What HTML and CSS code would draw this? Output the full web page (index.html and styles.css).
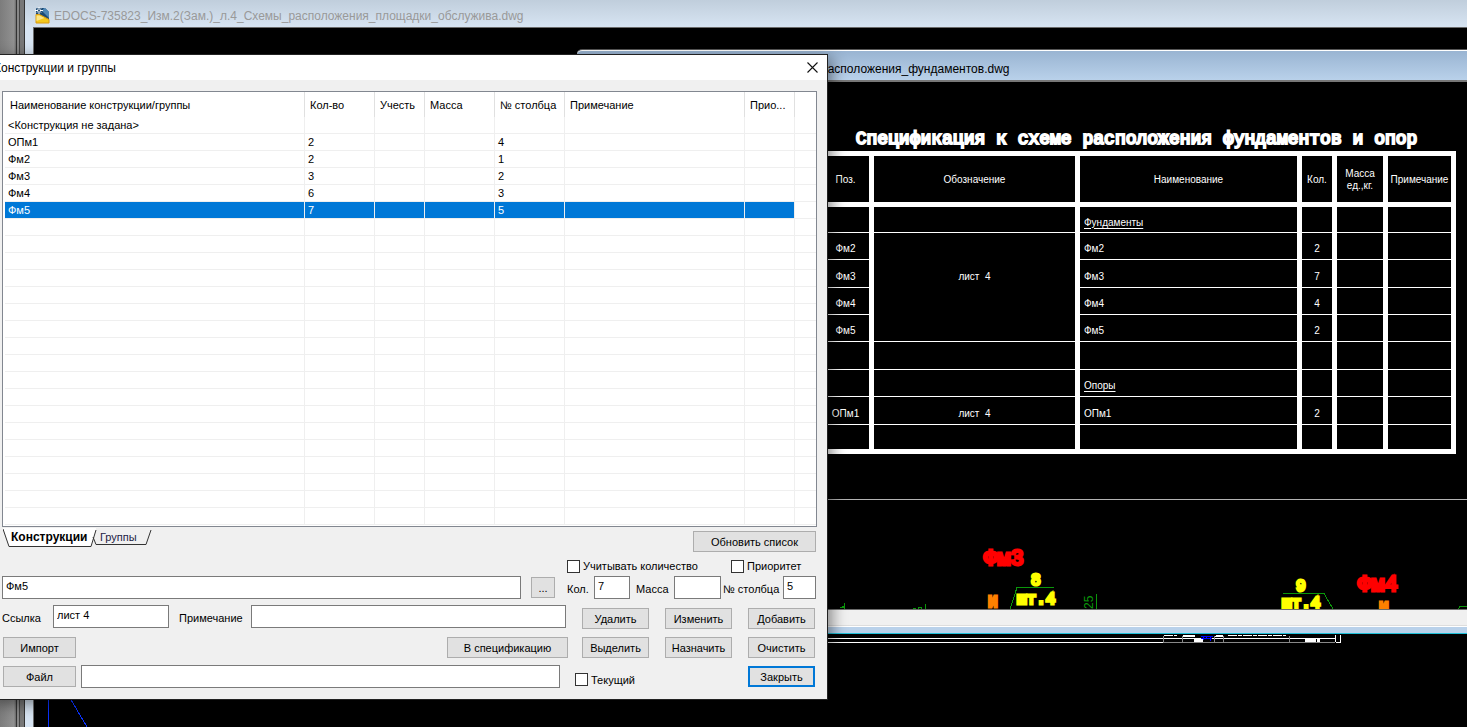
FILE: index.html
```html
<!DOCTYPE html>
<html lang="ru">
<head>
<meta charset="utf-8">
<title>Конструкции и группы</title>
<link rel="stylesheet" href="styles.css">
</head>
<body>
<div class="desktop">
  <div class="dock"></div>
  <section class="back-window">
    <header class="back-title">
      <svg class="doc-icon" width="16" height="17" viewBox="0 0 16 17">
        <path d="M1 1h9l4 4v11H1z" fill="#1c4a75"/>
        <path d="M9 1h1l4 4v6L7 4z" fill="#4f87b5"/>
        <path d="M1 7.500h3.500L14 12.500V16H1z" fill="#f4c81c" stroke="#d99a10"/>
        <path d="M1.500 8.500h3l5 2.500-8 3z" fill="#fbe58a"/>
        <path d="M4 0v7M0 3.500h8M2 1.500l4 4M6 1.500l-4 4" stroke="#fff"/>
        <circle cx="4" cy="3.500" r="1" fill="#1c4a75"/>
      </svg>
      <span>EDOCS-735823_Изм.2(Зам.)_л.4_Схемы_расположения_площадки_обслужива.dwg</span>
    </header>
    <div class="back-canvas">
      <svg class="back-drawing" width="100%" height="100%">
        <g transform="translate(-34 -28)" fill="none" shape-rendering="crispEdges">
          <path d="M48.500 690V727M70 698L87 727" stroke="#0a32ff"/>
          <path d="M820 638.500H1335M820 642.500H1163M1335.500 635v7M1340.500 635v7.500h-5" stroke="#fff"/>
          <path d="M1163 642.500h172M1163.500 636v6M1182.500 636v6M1214.500 636v6M1223.500 636v6M1289.500 636v6" stroke="#888"/>
          <path d="M1164 635.500h13M1183 636.500h12M1215 636.500h8M1228 635.500h58" stroke="#fff" stroke-dasharray="9 1 4 1"/>
          <path d="M1183 635h12v2h-12zM1194 638h9v4h-9zM1216 635h7v2h-7zM1305 639h11v3h-11zM1317 639h3v3h-3z" fill="#fff"/>
          <path d="M1201 636.500h12M1203 637v3M1206 637v2M1210 637v4M1201 638.500h11" stroke="#00f"/>
        </g>
      </svg>
    </div>
  </section>

  <section class="front-window">
    <header class="front-title"><span>расположения_фундаментов.dwg</span></header>
    <div class="front-canvas">
      <div class="spec">
        <h1 class="spec-title">Спецификация к схеме расположения фундаментов и опор</h1>
        <table class="spec-table">
          <colgroup><col class="s1"><col class="s2"><col class="s3"><col class="s4"><col class="s5"><col class="s6"></colgroup>
          <thead>
            <tr><th>Поз.</th><th>Обозначение</th><th>Наименование</th><th>Кол.</th><th>Масса<br>ед.,кг.</th><th>Примечание</th></tr>
          </thead>
          <tbody>
            <tr class="first"><td></td><td></td><td class="name"><u>Фундаменты</u></td><td></td><td></td><td></td></tr>
            <tr><td>Фм2</td><td rowspan="4" class="sheet">лист&nbsp; 4</td><td class="name">Фм2</td><td>2</td><td></td><td></td></tr>
            <tr class="tall"><td>Фм3</td><td class="name">Фм3</td><td>7</td><td></td><td></td></tr>
            <tr><td>Фм4</td><td class="name">Фм4</td><td>4</td><td></td><td></td></tr>
            <tr><td>Фм5</td><td class="name">Фм5</td><td>2</td><td></td><td></td></tr>
            <tr class="tall"><td></td><td></td><td></td><td></td><td></td><td></td></tr>
            <tr><td></td><td></td><td class="name"><u>Опоры</u></td><td></td><td></td><td></td></tr>
            <tr class="tall"><td>ОПм1</td><td>лист&nbsp; 4</td><td class="name">ОПм1</td><td>2</td><td></td><td></td></tr>
            <tr class="last"><td></td><td></td><td></td><td></td><td></td><td></td></tr>
          </tbody>
        </table>
      </div>
      <svg class="plan" width="100%">
        <g transform="translate(-577 -454)">
          <path d="M577 499.500H2000" stroke="#fff" stroke-opacity=".7" shape-rendering="crispEdges"/>
          <g fill="none" stroke="#0a960a" shape-rendering="crispEdges">
            <path d="M1010 609L1017 587.500H1054M1283 593.500H1324L1333 609M1096.500 594V609M925.500 604V609M844.500 603V609M840 608l4-2M841 607h3v2M1458 609l2-2.500h7M913 608.500h3M918 608.500l1-1h2l1 1"/>
          </g>
          <text class="plan-dim" transform="translate(1093 609) rotate(-90)">25</text>
          <text class="plan-mark" x="984" y="565">Фм3</text>
          <text class="plan-mark" x="1358" y="591">Фм4</text>
          <g class="plan-count">
            <text x="1031" y="585">8</text><text x="1017" y="604">шт.4</text>
            <text x="1296" y="591">9</text><text x="1282" y="608">шт.4</text>
          </g>
          <g class="plan-note"><text x="988" y="607">И</text><text x="1379" y="613">И</text></g>
        </g>
      </svg>
    </div>
    <div class="front-status"></div>
    <div class="front-edge"></div>
  </section>

  <section class="dialog" role="dialog" aria-labelledby="dlg-title">
    <header class="dlg-head">
      <span id="dlg-title">Конструкции и группы</span>
      <button class="close" aria-label="Закрыть окно"><svg width="11" height="11" viewBox="0 0 11 11"><path d="M.5 .5l10 10M10.500 .5l-10 10" stroke="#111" stroke-width="1.100"/></svg></button>
    </header>
    <div class="dlg-body">
      <div class="list">
        <table class="grid">
          <colgroup><col class="g1"><col class="g2"><col class="g3"><col class="g2"><col class="g2"><col class="g6"><col class="g3"><col></colgroup>
          <thead><tr><th>Наименование конструкции/группы</th><th>Кол-во</th><th>Учесть</th><th>Масса</th><th>№ столбца</th><th>Примечание</th><th>Прио...</th><th></th></tr></thead>
          <tbody>
            <tr><td>&lt;Конструкция не задана&gt;</td><td></td><td></td><td></td><td></td><td></td><td></td><td></td></tr>
            <tr><td>ОПм1</td><td>2</td><td></td><td></td><td>4</td><td></td><td></td><td></td></tr>
            <tr><td>Фм2</td><td>2</td><td></td><td></td><td>1</td><td></td><td></td><td></td></tr>
            <tr><td>Фм3</td><td>3</td><td></td><td></td><td>2</td><td></td><td></td><td></td></tr>
            <tr><td>Фм4</td><td>6</td><td></td><td></td><td>3</td><td></td><td></td><td></td></tr>
            <tr class="selected"><td>Фм5</td><td>7</td><td></td><td></td><td>5</td><td></td><td></td><td></td></tr>
            <tr><td></td><td></td><td></td><td></td><td></td><td></td><td></td><td></td></tr>
            <tr><td></td><td></td><td></td><td></td><td></td><td></td><td></td><td></td></tr>
            <tr><td></td><td></td><td></td><td></td><td></td><td></td><td></td><td></td></tr>
            <tr><td></td><td></td><td></td><td></td><td></td><td></td><td></td><td></td></tr>
            <tr><td></td><td></td><td></td><td></td><td></td><td></td><td></td><td></td></tr>
            <tr><td></td><td></td><td></td><td></td><td></td><td></td><td></td><td></td></tr>
            <tr><td></td><td></td><td></td><td></td><td></td><td></td><td></td><td></td></tr>
            <tr><td></td><td></td><td></td><td></td><td></td><td></td><td></td><td></td></tr>
            <tr><td></td><td></td><td></td><td></td><td></td><td></td><td></td><td></td></tr>
            <tr><td></td><td></td><td></td><td></td><td></td><td></td><td></td><td></td></tr>
            <tr><td></td><td></td><td></td><td></td><td></td><td></td><td></td><td></td></tr>
            <tr><td></td><td></td><td></td><td></td><td></td><td></td><td></td><td></td></tr>
            <tr><td></td><td></td><td></td><td></td><td></td><td></td><td></td><td></td></tr>
            <tr><td></td><td></td><td></td><td></td><td></td><td></td><td></td><td></td></tr>
            <tr><td></td><td></td><td></td><td></td><td></td><td></td><td></td><td></td></tr>
            <tr><td></td><td></td><td></td><td></td><td></td><td></td><td></td><td></td></tr>
            <tr><td></td><td></td><td></td><td></td><td></td><td></td><td></td><td></td></tr>
            <tr><td></td><td></td><td></td><td></td><td></td><td></td><td></td><td></td></tr>
          </tbody>
        </table>
      </div>

      <div class="tab-row">
        <div class="tabs" role="tablist">
          <svg class="tab-shape" width="150" height="20" viewBox="0 0 150 20">
            <path d="M0 0L6 18.500H88L93 1V0z" fill="#fff"/>
            <path d="M0 1L6 18.500H88L93 2M90 9l3 7.500h50L148 2" fill="none" stroke="#333"/>
          </svg>
          <button class="tab active" role="tab" aria-selected="true">Конструкции</button>
          <button class="tab" role="tab" aria-selected="false">Группы</button>
        </div>
        <button class="btn refresh">Обновить список</button>
      </div>

      <div class="check-row">
        <label class="check qty-check"><input type="checkbox">Учитывать количество</label>
        <label class="check"><input type="checkbox">Приоритет</label>
      </div>

      <div class="row">
        <input class="field name-field" type="text" value="Фм5" aria-label="Наименование">
        <button class="btn dots">...</button>
        <label class="lbl l-qty" for="qty">Кол.</label><input class="field f-qty" id="qty" type="text" value="7">
        <label class="lbl l-mass" for="mass">Масса</label><input class="field f-mass" id="mass" type="text">
        <label class="lbl l-col" for="colno">№ столбца</label><input class="field f-col" id="colno" type="text" value="5">
      </div>

      <div class="row link-row">
        <label class="lbl l-link" for="link">Ссылка</label><input class="field f-link" id="link" type="text" value="лист 4">
        <label class="lbl l-note" for="note">Примечание</label><input class="field f-note" id="note" type="text">
        <div class="actions"><button class="btn">Удалить</button><button class="btn">Изменить</button><button class="btn">Добавить</button></div>
      </div>

      <div class="row">
        <button class="btn side">Импорт</button>
        <button class="btn to-spec">В спецификацию</button>
        <div class="actions"><button class="btn">Выделить</button><button class="btn">Назначить</button><button class="btn">Очистить</button></div>
      </div>

      <div class="row">
        <button class="btn side">Файл</button>
        <input class="field f-file" type="text" aria-label="Файл">
        <label class="check current"><input type="checkbox">Текущий</label>
        <div class="actions"><button class="btn default">Закрыть</button></div>
      </div>
    </div>
  </section>
</div>
</body>
</html>
```
FILE: styles.css
```css
* { box-sizing: border-box; }
body { margin: 0; font: 11px/16px "Liberation Sans", Arial, sans-serif; color: #000; }
button, input { font: inherit; color: inherit; margin: 0; padding: 0; border-radius: 0; }
.desktop { position: relative; display: flex; height: 100vh; overflow: hidden; background: #000; }

.dock {
  width: 25px; flex: none; border-right: 1px solid #333;
  background: linear-gradient(90deg, #7c7c7c 0, #919191 14px, #6a6a6a 16px, #333 16px, #333 17px, #888 17px, #888 19px, #444 19px, #444 20px, #777 20px);
}
.back-window { flex: 1; display: flex; flex-direction: column; min-width: 0; background: #d7e4f2; }
.back-title {
  display: flex; align-items: center; gap: 3px; height: 27px; padding: 4px 0 0 10px;
  background: linear-gradient(#c0cedc, #d7e4f2);
  color: #999; font: 12px/16px "Liberation Sans", Arial, sans-serif; white-space: nowrap;
}
.doc-icon { flex: none; }
.back-canvas { flex: 1; margin-left: 8px; border: solid #6b6b6b; border-width: 1px 0 0 1px; background: #000; min-height: 0; overflow: hidden; }
.back-drawing { display: block; }

.front-window { position: absolute; left: 577px; right: 0; top: 49px; height: 585px; display: flex; flex-direction: column; }
.front-title {
  height: 33px; border-top: 1px solid #555; border-bottom: 2px solid #777; border-radius: 5px 0 0 0;
  box-shadow: inset 0 1px #fff; padding: 11px 0 0 244px;
  background: linear-gradient(#98b3d1, #b9d1ea);
  font: 12px/16px "Liberation Sans", Arial, sans-serif; white-space: nowrap;
}
.front-canvas { flex: 1; display: flex; flex-direction: column; min-height: 0; padding-top: 45px; background: #000; overflow: hidden; }
.spec { width: 639px; margin-left: 240px; color: #fff; font: 10px/12px "Liberation Sans", Arial, sans-serif; }
.spec-title { margin: 0; text-align: center; white-space: nowrap; font: 18px/24px "Liberation Mono", monospace; -webkit-text-stroke: 2px #fff; }
.spec-table { width: 100%; table-layout: fixed; border-collapse: separate; border-spacing: 0; border: solid #fff; border-width: 5px 0 0 5px; }
.s1 { width: 52px; } .s2 { width: 206px; } .s3 { width: 222px; } .s4 { width: 35px; } .s5 { width: 51px; } .s6 { width: 68px; }
.spec-table th { height: 51px; padding: 2px 0 0; font-weight: normal; border: solid #fff; border-width: 0 5px 5px 0; white-space: nowrap; }
.spec-table td { height: 27px; padding: 6px 0 0; text-align: center; border: solid #fff; border-width: 0 5px 1px 0; }
.spec-table .first td { height: 26px; }
.spec-table .tall td { height: 28px; }
.spec-table .last td { height: 29px; border-bottom-width: 5px; }
.spec-table .name { text-align: left; padding-left: 4px; }
.spec-table .sheet { padding-bottom: 26px; }
.spec-table u { text-underline-offset: 2px; }
.plan { flex: 1; display: block; min-height: 0; }
.plan-dim { font: 12px "Liberation Sans", sans-serif; fill: #0a960a; }
.plan-mark { font: 22px "Liberation Mono", monospace; fill: #f00; stroke: #f00; stroke-width: 3px; }
.plan-count { font: 16px "Liberation Mono", monospace; fill: #ff0; stroke: #ff0; stroke-width: 3px; }
.plan-note { font: 16px "Liberation Mono", monospace; fill: #ff8000; stroke: #ff8000; stroke-width: 3px; }
.front-status { height: 17px; background: #f0f0f0; border-top: 1px solid #6b6b6b; border-bottom: 1px solid #ddd; }
.front-edge { height: 8px; background: #b9d1ea; border-top: 1px solid #fff; border-bottom: 1px solid #1fc0d8; }

.dialog {
  position: absolute; left: -10px; top: 54px; width: 838px;
  background: #f0f0f0; border: 1px solid #222; box-shadow: 4px 4px 14px rgba(0, 0, 0, .45);
}
.dlg-head { display: flex; align-items: center; justify-content: space-between; height: 25px; padding: 0 9px 0 3px; background: #fff; font: 12px/16px "Liberation Sans", Arial, sans-serif; }
.close { border: 0; background: none; width: 11px; height: 11px; display: flex; }
.dlg-body { padding: 11px 10px 8px 11px; }
.list { border: 1px solid #828790; background: #fff; padding: 0 0 1px 2px; }
.grid { width: 100%; table-layout: fixed; border-collapse: separate; border-spacing: 0; }
.g1 { width: 300px; } .g2 { width: 70px; } .g3 { width: 50px; } .g6 { width: 180px; }
.grid th { height: 25px; padding: 0 0 0 5px; text-align: left; font-weight: normal; border-right: 1px solid #e0e0e0; white-space: nowrap; overflow: hidden; }
.grid td { height: 17px; padding: 0 0 0 3px; line-height: 16px; border: solid #efefef; border-width: 0 1px 1px 0; white-space: nowrap; }
.grid th:last-child, .grid td:last-child { border-right: 0; }
.selected td:not(:last-child) { background: #0078d7; color: #fff; }

.tab-row { display: flex; justify-content: space-between; height: 32px; padding-right: 1px; }
.tabs { position: relative; display: flex; height: 20px; padding-left: 9px; gap: 13px; }
.tab-shape { position: absolute; left: 1px; top: 1px; }
.tab { position: relative; border: 0; background: none; height: 20px; white-space: nowrap; color: #224; }
.tab.active { font: bold 12px/16px "Liberation Sans", sans-serif; color: #000; width: 76px; }
.btn { height: 21px; border: 1px solid #adadad; background: #e1e1e1; white-space: nowrap; }
.btn.refresh { width: 123px; margin-top: 4px; }
.check-row { display: flex; height: 14px; padding-left: 565px; }
.check { display: flex; align-items: center; gap: 3px; white-space: nowrap; }
.check input { appearance: none; flex: none; width: 13px; height: 13px; border: 1px solid #333; background: #fff; }
.qty-check { width: 164px; }
.row { display: flex; align-items: center; height: 29px; }
.field { height: 23px; border: 1px solid #7a7a7a; background: #fff; padding: 0 3px 4px; min-width: 0; }
.name-field { width: 519px; }
.dots { width: 24px; margin: 0 12px 0 10px; }
.lbl { white-space: nowrap; padding-top: 2px; }
.l-qty { width: 27px; } .f-qty { width: 36px; }
.l-mass { width: 44px; padding-left: 6px; } .f-mass { width: 47px; }
.l-col { width: 62px; padding-left: 2px; } .f-col { width: 33px; }
.link-row { height: 31px; padding: 3px 0 4px; align-items: flex-start; }
.link-row .lbl { padding-top: 5px; }
.l-link { width: 51px; } .f-link { width: 116px; }
.link-row .l-note { width: 82px; padding-left: 10px; } .f-note { width: 315px; }
.actions { display: flex; gap: 16px; margin: 0 2px 0 auto; }
.link-row .actions { align-self: flex-end; }
.actions .btn { width: 67px; }
.side { width: 73px; margin-left: 1px; }
.to-spec { width: 121px; margin-left: 371px; }
.f-file { width: 479px; margin-left: 5px; }
.current { margin: 6px 0 0 15px; }
.btn.default { border: 2px solid #0078d7; }
```
